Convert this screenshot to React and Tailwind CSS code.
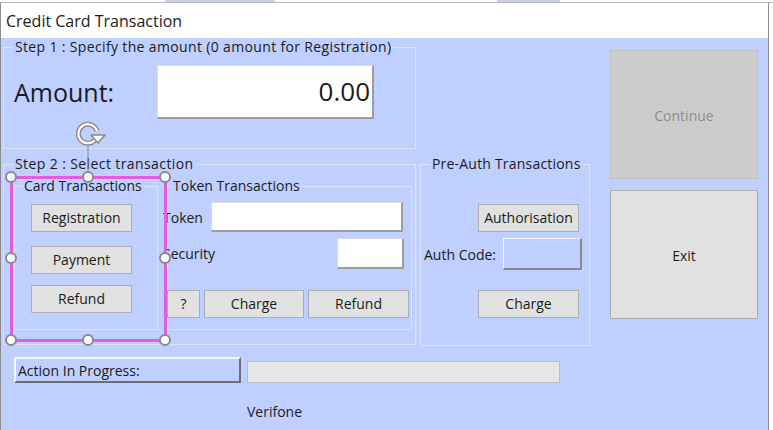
import React from 'react';

function Btn({ className = '', children }) {
  return (
    <button className={`bg-[#e1e1e1] border border-[#adadad] text-[14px] text-[#1b1b1b] leading-none flex items-center justify-center ${className}`}>
      {children}
    </button>
  );
}

function Group({ title, className = '', legendClass = '', children }) {
  return (
    <fieldset className={`border border-[#dde3f3] ${className}`}>
      <legend className={`px-[2px] text-[14px] leading-[18px] text-[#1b1b1b] ${legendClass}`}>{title}</legend>
      {children}
    </fieldset>
  );
}

function Handle({ className }) {
  return <div className={`absolute w-[12px] h-[12px] rounded-full bg-white border-2 border-[#8a8a8a] ${className}`} />;
}

export default function App() {
  return (
    <div className="relative w-[773px] h-[430px] overflow-hidden bg-white font-['Open_Sans',sans-serif] text-[#1b1b1b]">
      {/* designer stuff peeking out behind the form */}
      <div className="flex h-[3px] border-b border-[#b4b4b4]">
        <div className="w-[165px]" />
        <div className="w-[110px] bg-[#c5cfee]" />
        <div className="w-[222px]" />
        <div className="w-[63px] bg-[#c5cfee]" />
      </div>

      {/* form window */}
      <div className="w-[769px] h-[427px] border-l border-r border-[#8c8c8c] flex flex-col">
        <div className="h-[35px] flex items-center pl-[5px] text-[16px] bg-white">Credit Card Transaction</div>

        <div className="flex-1 bg-[#bfcfff] pl-[2px]">
          <div className="flex">
            <div className="w-[588px]">
              {/* Step 1 */}
              <Group title="Step 1 :  Specify the amount (0 amount for Registration)" className="w-[413px] h-[111px]" legendClass="ml-[9px] tracking-[0.35px]">
                <div className="flex items-start mt-[9px]">
                  <div className="w-[153px] pl-[10px] pt-[12px] text-[25px] leading-[30px]">Amount:</div>
                  <div className="w-[217px] h-[54px] bg-white border-t border-l border-t-[#dcdcdc] border-l-[#dcdcdc] border-r-2 border-b-2 border-r-[#9c9c9c] border-b-[#9c9c9c] flex items-center justify-end pr-[2px] text-[26px]">
                    0.00
                  </div>
                </div>
              </Group>

              <div className="flex mt-[6px]">
                {/* Step 2 */}
                <Group title="Step 2 :  Select transaction" className="w-[413px] h-[190px]" legendClass="ml-[9px] tracking-[0.4px]">
                  <div className="flex mt-[4px] pl-[10px]">
                    <Group title="Card Transactions" className="w-[144px] h-[153px]" legendClass="ml-[7px]">
                      <div className="pl-[16px] pt-[9px] flex flex-col">
                        <Btn className="w-[101px] h-[28px]">Registration</Btn>
                        <Btn className="w-[101px] h-[28px] mt-[14px]">Payment</Btn>
                        <Btn className="w-[101px] h-[28px] mt-[11px]">Refund</Btn>
                      </div>
                    </Group>

                    <Group title="Token Transactions" className="w-[245px] h-[153px] ml-[9px]" legendClass="ml-[3px]">
                      <div className="flex items-center mt-[7px] ml-[-5px]">
                        <span className="w-[48px] text-[14px]">Token</span>
                        <div className="w-[192px] h-[30px] bg-white border-t border-l border-t-[#dcdcdc] border-l-[#dcdcdc] border-r-2 border-b-2 border-r-[#9c9c9c] border-b-[#9c9c9c]" />
                      </div>
                      <div className="flex items-center mt-[6px] ml-[-5px]">
                        <span className="w-[174px] text-[14px]">Security</span>
                        <div className="w-[67px] h-[31px] bg-white border-t border-l border-t-[#dcdcdc] border-l-[#dcdcdc] border-r-2 border-b-2 border-r-[#9c9c9c] border-b-[#9c9c9c]" />
                      </div>
                      <div className="flex gap-[4px] mt-[21px] ml-[-1px]">
                        <Btn className="w-[33px] h-[28px]">?</Btn>
                        <Btn className="w-[100px] h-[28px]">Charge</Btn>
                        <Btn className="w-[101px] h-[28px]">Refund</Btn>
                      </div>
                    </Group>
                  </div>
                </Group>

                {/* Pre-Auth */}
                <Group title="Pre-Auth Transactions" className="w-[170px] h-[191px] ml-[4px]" legendClass="ml-[9px] tracking-[0.2px]">
                  <Btn className="w-[101px] h-[28px] mt-[31px] ml-[57px]">Authorisation</Btn>
                  <div className="flex items-center mt-[6px] ml-[3px]">
                    <span className="w-[79px] text-[14px]">Auth Code:</span>
                    <div className="w-[79px] h-[32px] border-t border-l border-t-[#f2f2f2] border-l-[#f2f2f2] border-r-2 border-b-2 border-r-[#8a8a8a] border-b-[#8a8a8a]" />
                  </div>
                  <Btn className="w-[101px] h-[28px] mt-[20px] ml-[57px]">Charge</Btn>
                </Group>
              </div>
            </div>

            {/* big buttons */}
            <div className="ml-[19px] pt-[12px] flex flex-col gap-[11px]">
              <button className="w-[148px] h-[129px] pt-[2px] bg-[#cccccc] border border-[#bfbfbf] text-[14px] text-[#8d8d8d]">Continue</button>
              <Btn className="w-[148px] h-[129px] pt-[2px]">Exit</Btn>
            </div>
          </div>

          <div className="flex items-start mt-[11px] ml-[11px]">
            <div className="w-[227px] h-[26px] flex items-center pl-[2px] text-[14px] border-t-2 border-l-2 border-t-[#f4f6ff] border-l-[#f4f6ff] border-r-2 border-b-2 border-r-[#6e6e6e] border-b-[#6e6e6e]">
              Action In Progress:
            </div>
            <div className="w-[313px] h-[22px] mt-[4px] ml-[6px] bg-[#e6e6e6] border border-[#bcbcbc]" />
          </div>

          <div className="mt-[19px] ml-[244px] text-[14px] leading-[20px]">Verifone</div>
        </div>
      </div>

      {/* designer selection adornments */}
      <div className="absolute left-[10px] top-[176px] w-[157px] h-[166px] border-[3px] border-[#e35de3]" />
      <Handle className="left-[5px] top-[171px]" />
      <Handle className="left-[82px] top-[171px]" />
      <Handle className="left-[159px] top-[171px]" />
      <Handle className="left-[5px] top-[252px]" />
      <Handle className="left-[159px] top-[252px]" />
      <Handle className="left-[5px] top-[334px]" />
      <Handle className="left-[82px] top-[334px]" />
      <Handle className="left-[159px] top-[334px]" />

      <svg className="absolute left-[74px] top-[120px]" width="36" height="56" viewBox="0 0 36 56">
        <line x1="14" y1="24" x2="14" y2="52" stroke="#8a8a8a" strokeWidth="1" />
        <path d="M23 11 A9.5 9.5 0 1 0 21 20" fill="none" stroke="#8a8a8a" strokeWidth="5" />
        <path d="M23 11 A9.5 9.5 0 1 0 21 20" fill="none" stroke="#ffffff" strokeWidth="2.2" />
        <path d="M17 15 L31 15 L24 23 Z" fill="#ffffff" stroke="#8a8a8a" strokeWidth="1.6" strokeLinejoin="round" />
      </svg>
    </div>
  );
}
